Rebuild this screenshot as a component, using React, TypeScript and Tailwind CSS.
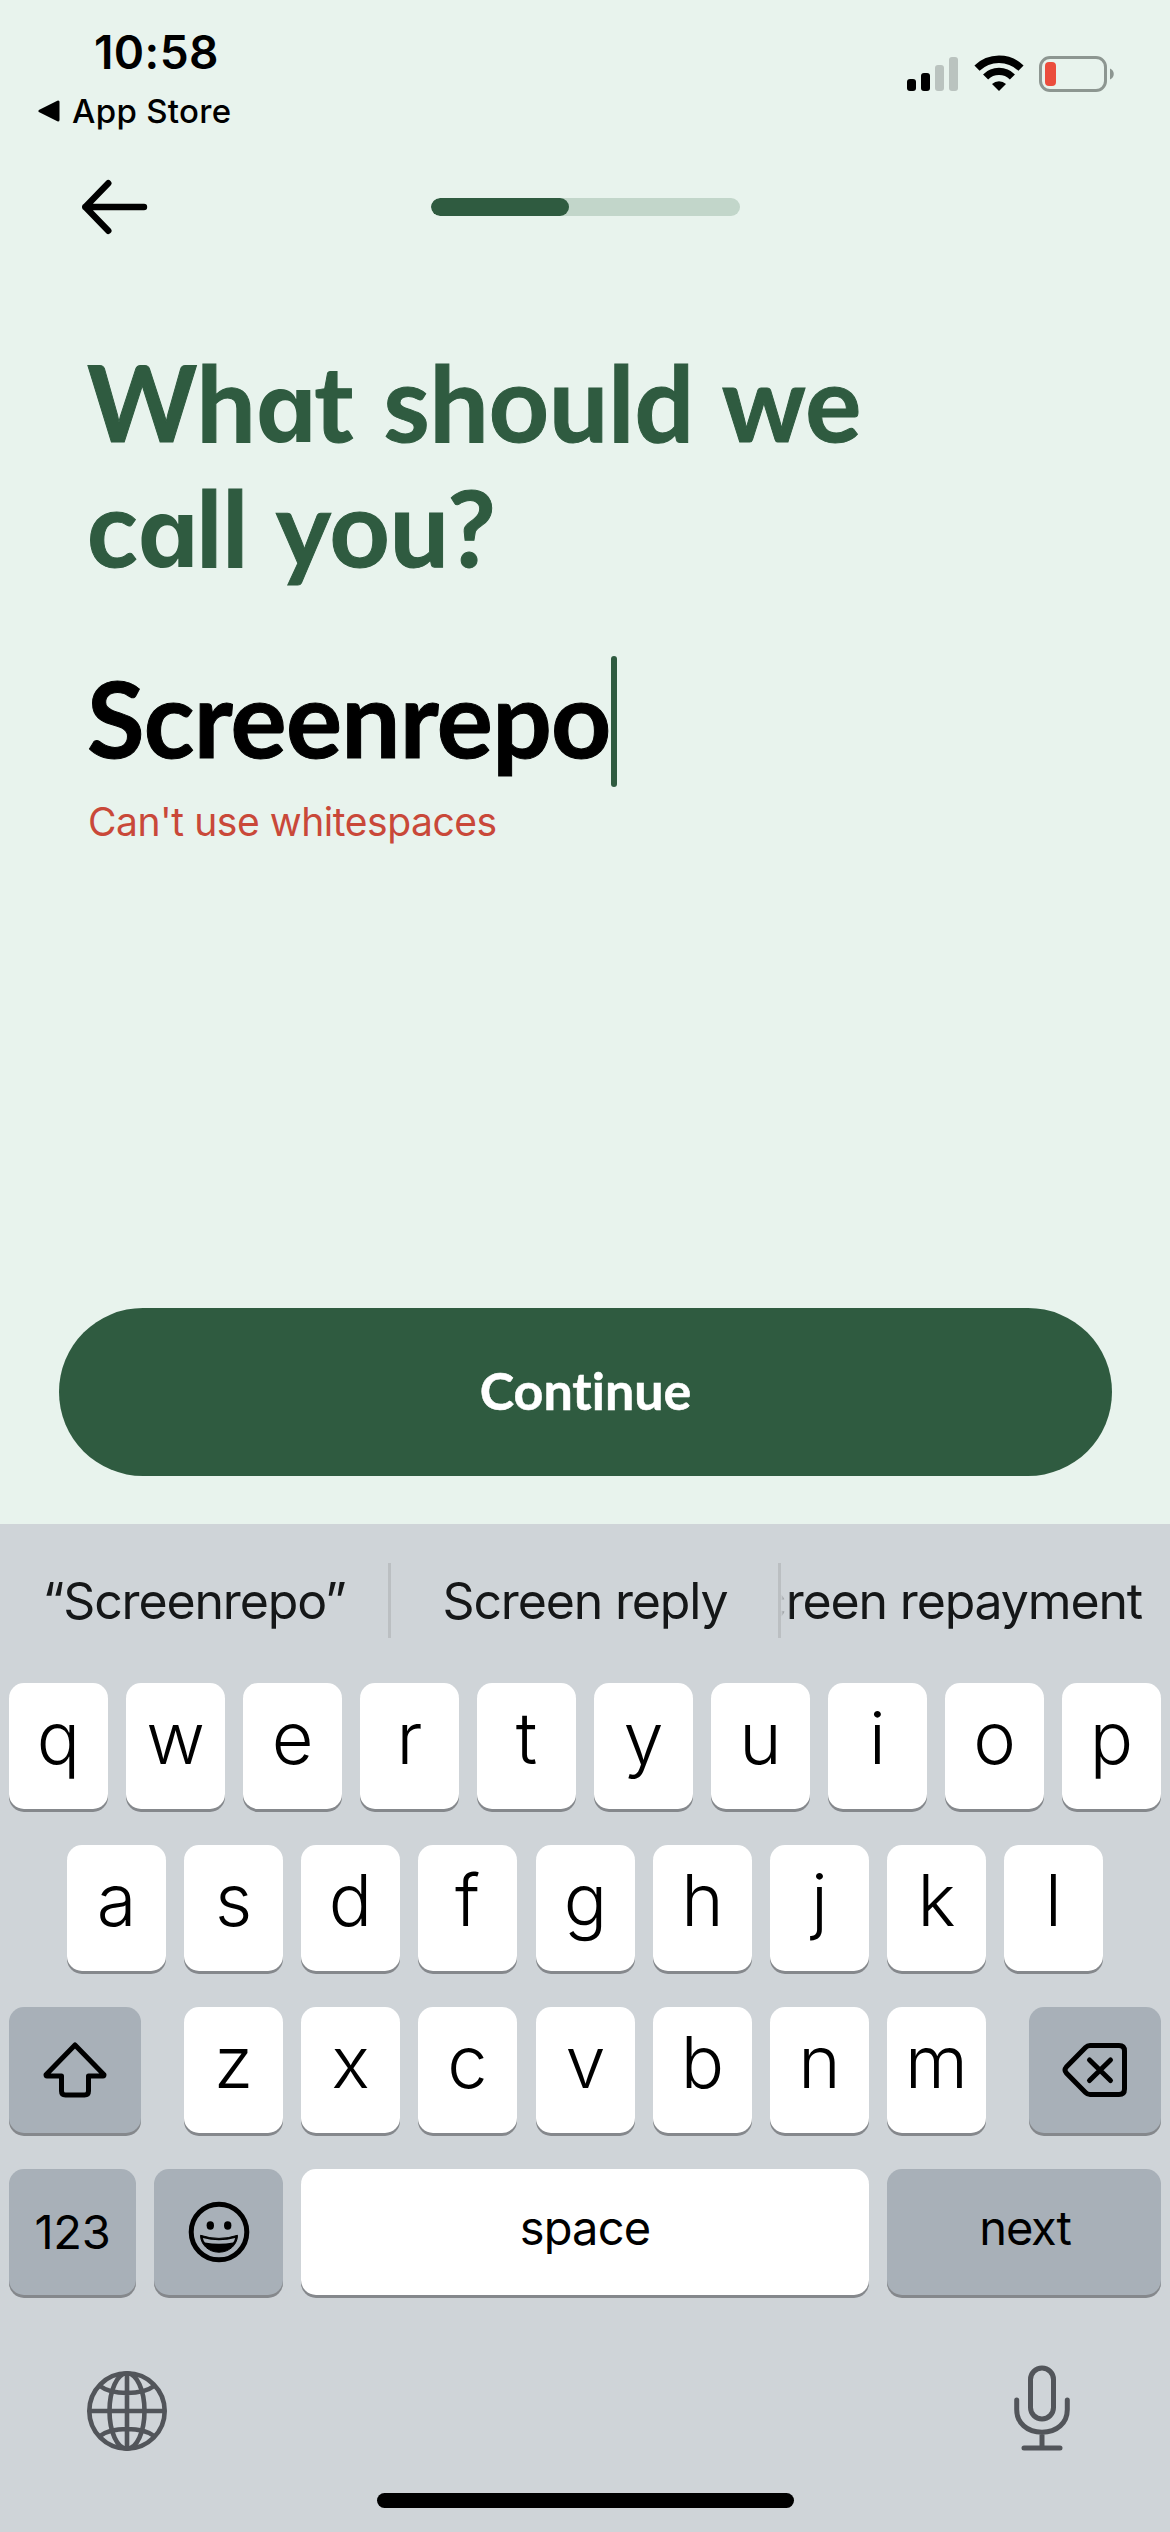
import type { ReactNode } from "react";

const DISPLAY = "font-['Lato','Open_Sans',sans-serif] font-bold [font-variant-ligatures:none]";

function StatusBar() {
  return (
    <header className="flex h-[150px] justify-between pl-[38px] pr-[55px] text-black">
      <div className="flex flex-col pt-[22px]">
        <span className="h-[60px] pl-[56px] text-[46px] leading-[60px] font-semibold tracking-[0.4px]">10:58</span>
        <div className="mt-[9px] flex h-[40px] items-center gap-[12px]">
          <svg className="h-[22px] w-[22px]" viewBox="0 0 22 22">
            <path d="M2 11 20 2V20Z" stroke="#000" strokeWidth="3" strokeLinejoin="round" />
          </svg>
          <span className="text-[33px] leading-[40px] font-medium tracking-[0.3px]">App Store</span>
        </div>
      </div>
      <div className="flex items-start pt-[55px]">
        <svg className="mt-[2px] h-[34px] w-[51px]" viewBox="0 0 51 34">
          <rect x="0" y="22" width="9" height="12" rx="3" />
          <rect x="14" y="16" width="9" height="18" rx="3" />
          <rect x="28" y="8" width="9" height="26" rx="3" fill="#bac3bf" />
          <rect x="42" y="0" width="9" height="34" rx="3" fill="#bac3bf" />
        </svg>
        <svg className="ml-[16px] h-[36px] w-[50px]" viewBox="0 0 50 36">
          <path d="M3 13.2A31.5 31.5 0 0 1 47 13.2" fill="none" stroke="#000" strokeWidth="7.4" />
          <path d="M11.6 22A19 19 0 0 1 38.4 22" fill="none" stroke="#000" strokeWidth="7.2" />
          <path d="M18 28.9A10.4 10.4 0 0 1 32 28.9L25 36Z" />
        </svg>
        <svg className="ml-[15px] h-[38px] w-[76px]" viewBox="0 0 76 38">
          <rect x="1.5" y="2.5" width="65" height="33" rx="9.5" fill="none" stroke="#8d9691" strokeWidth="3" />
          <rect x="6" y="7" width="11" height="24" rx="4" fill="#eb4d3d" />
          <path d="M71 13.5C76 15.5 76 22.5 71 24.5Z" fill="#8d9691" />
        </svg>
      </div>
    </header>
  );
}

function NavRow() {
  return (
    <div className="grid h-[114px] grid-cols-[350px_309px] pl-[81px]">
      <svg className="mt-[29px] h-[56px] w-[68px]" viewBox="0 0 68 56" fill="none" stroke="#000" strokeWidth="6.4" strokeLinecap="round" strokeLinejoin="round">
        <path d="M27.3 4.2 4.3 28 27.3 51.8M4.3 28H63" />
      </svg>
      <div className="mt-[48px] h-[18px] w-[309px] overflow-hidden rounded-full bg-[#c2d6ca]">
        <div className="h-full w-[138px] rounded-full bg-[#2f5b40]" />
      </div>
    </div>
  );
}

/* Single-storey "a", sized to the x-height of the display face. */
function RoundA() {
  return (
    <span className="font-['Inter'] text-[96px] leading-none font-bold tracking-[-2px] [-webkit-text-stroke:0] [font-feature-settings:'cv11']">a</span>
  );
}

const LIGHT = "bg-white";
const DARK = "bg-[#a8b0b8]";

function Key({ className, tone = LIGHT, children }: { className: string; tone?: string; children: ReactNode }) {
  return (
    <button className={`flex h-[126px] shrink-0 items-center justify-center rounded-[15px] text-black shadow-[0_3px_0_#85888c] ${tone} ${className}`}>
      {children}
    </button>
  );
}

function Letter({ char, className = "" }: { char: string; className?: string }) {
  return (
    <Key className={`w-[99px] ${className}`}>
      <span className="block h-[126px] text-[72px] leading-[110px] font-light">{char}</span>
    </Key>
  );
}

function ShiftIcon() {
  return (
    <svg className="h-[56px] w-[64px]" viewBox="0 0 64 56" fill="none" stroke="#000" strokeWidth="5" strokeLinejoin="round">
      <path d="M32 3 61 32.8Q61 34 60 34H45.500V49Q45.500 53 41.500 53H22.500Q18.500 53 18.500 49V34H4Q3 34 3 32.800Z" />
    </svg>
  );
}

function DeleteIcon() {
  return (
    <svg className="h-[54px] w-[66px]" viewBox="0 0 66 54" fill="none" stroke="#000" strokeWidth="5" strokeLinecap="round" strokeLinejoin="round">
      <path d="M28 2.500H57Q62.500 2.500 62.500 8V46Q62.500 51.500 57 51.500H28Q25.500 51.500 23.500 49.500L4.300 30Q1.800 27 4.300 24L23.500 4.500Q25.500 2.500 28 2.500Z" />
      <path d="M27.500 17 48.500 37.500M48.500 17 27.500 37.500" />
    </svg>
  );
}

function EmojiIcon() {
  return (
    <svg className="h-[62px] w-[62px]" viewBox="0 0 62 62">
      <circle cx="31" cy="31" r="27.800" fill="none" stroke="#000" strokeWidth="5" />
      <ellipse cx="22.300" cy="24.500" rx="3.700" ry="4.200" />
      <ellipse cx="39.700" cy="24.500" rx="3.700" ry="4.200" />
      <path d="M12.500 34.300Q31 40.500 49.500 34.300C49.500 43 42 51.200 31 51.200S12.500 43 12.500 34.300Z" stroke="#000" strokeLinejoin="round" />
      <path d="M14.800 37Q31 41.500 47.200 37Q46.500 40 45 41.500Q31 44 17 41.500Q15.500 40 14.800 37Z" fill="#a8b0b8" />
    </svg>
  );
}

function GlobeIcon() {
  return (
    <svg className="h-[82px] w-[82px]" viewBox="0 0 82 82" fill="none" stroke="#52555a" strokeWidth="4.600">
      <circle cx="41" cy="41" r="37.700" />
      <ellipse cx="41" cy="41" rx="17.500" ry="37.700" />
      <path d="M41 3V79M3 41H79M14 16Q23 23 41 23T68 16M14 66Q23 59 41 59T68 66" />
    </svg>
  );
}

function MicIcon() {
  return (
    <svg className="h-[86px] w-[58px]" viewBox="0 0 58 86" fill="none" stroke="#52555a" strokeWidth="5" strokeLinecap="round">
      <rect x="17.500" y="3" width="23" height="51" rx="11.500" />
      <path d="M3.700 35V44.500C3.700 58 14 67.300 29 67.300S54.300 58 54.300 44.500V35M29 68V82M11 83H47" />
    </svg>
  );
}

function Suggestions() {
  return (
    <div className="flex h-[159px] items-start pt-[39px] text-[50px] leading-[61px] tracking-[-1.15px] text-[#151718]">
      <div className="flex h-[75px] w-[388px] justify-center pt-[8px]">
        <span>“Screenrepo”</span>
      </div>
      <div className="h-[75px] w-[3px] bg-[#bbbfc2]" />
      <div className="flex h-[75px] w-[387px] justify-center pl-px pt-[8px]">
        <span>Screen reply</span>
      </div>
      <div className="h-[75px] w-[3px] bg-[#bbbfc2]" />
      <div className="flex h-[75px] w-[389px] justify-end overflow-hidden pr-[28px] pt-[8px] [mask-image:linear-gradient(to_right,transparent,black_10px)]">
        <span className="whitespace-nowrap">Screen repayment</span>
      </div>
    </div>
  );
}

function Keyboard() {
  return (
    <section className="h-[1008px] bg-[#cfd4d8]">
      <Suggestions />
      <div className="flex flex-col gap-[36px]">
        <div className="flex gap-[18px] pl-[9px]">
          {"qwertyuiop".split("").map((c) => (
            <Letter key={c} char={c} />
          ))}
        </div>
        <div className="flex gap-[18px] pl-[67px]">
          {"asdfghjkl".split("").map((c) => (
            <Letter key={c} char={c} className={c === "g" ? "ml-px" : ""} />
          ))}
        </div>
        <div className="flex justify-between px-[9px]">
          <Key tone={DARK} className="w-[132px]">
            <ShiftIcon />
          </Key>
          <div className="flex gap-[18px]">
            {"zxcvbnm".split("").map((c) => (
              <Letter key={c} char={c} className={c === "v" ? "ml-px" : ""} />
            ))}
          </div>
          <Key tone={DARK} className="w-[132px]">
            <DeleteIcon />
          </Key>
        </div>
        <div className="flex gap-[18px] pl-[9px] text-[47px]">
          <Key tone={DARK} className="w-[127px]">
            <span className="tracking-[-0.3px]">123</span>
          </Key>
          <Key tone={DARK} className="w-[129px]">
            <EmojiIcon />
          </Key>
          <Key className="w-[568px] pb-[8px]">
            <span className="tracking-[-0.8px]">space</span>
          </Key>
          <Key tone={DARK} className="w-[274px] pb-[8px] pl-[2px]">
            <span className="tracking-[-1.2px]">next</span>
          </Key>
        </div>
      </div>
      <div className="mt-[70px] flex h-[86px] items-center justify-between pl-[86px] pr-[99px]">
        <div className="pt-[5px]">
          <GlobeIcon />
        </div>
        <MicIcon />
      </div>
      <div className="mx-auto mt-[42px] h-[15px] w-[417px] rounded-full bg-black" />
    </section>
  );
}

export default function App() {
  return (
    <main className="flex h-[2532px] w-[1170px] flex-col overflow-hidden bg-[#e8f3ed] font-['Inter','Liberation_Sans',sans-serif]">
      <StatusBar />
      <NavRow />
      <div className="h-[1044px] pl-[87px] pt-[75px]">
        <h1 className={`h-[250px] text-[105px] leading-[125px] text-[#2f5b40] [-webkit-text-stroke:1px_#2f5b40] [word-spacing:4.500px] ${DISPLAY}`}>
          Wh<RoundA />t should we
          <br />
          c<RoundA />ll you?
        </h1>
        <div className="mt-[67px] flex h-[131px]">
          <span className={`text-[105px] leading-[122px] tracking-[-0.7px] text-black [-webkit-text-stroke:1px_black] ${DISPLAY}`}>Screenrepo</span>
          <span className="h-[131px] w-[6px] rounded-full bg-[#2f5b40]" />
        </div>
        <p className="mt-[11px] pl-px text-[39px] leading-[48px] tracking-[-0.45px] text-[#c94839]">Can't use whitespaces</p>
      </div>
      <button className={`ml-[59px] flex h-[168px] w-[1053px] items-center justify-center rounded-full bg-[#2f5b40] pb-[4px] text-[52px] leading-none text-white [-webkit-text-stroke:0.5px_white] ${DISPLAY}`}>
        Continue
      </button>
      <div className="mt-auto">
        <Keyboard />
      </div>
    </main>
  );
}
